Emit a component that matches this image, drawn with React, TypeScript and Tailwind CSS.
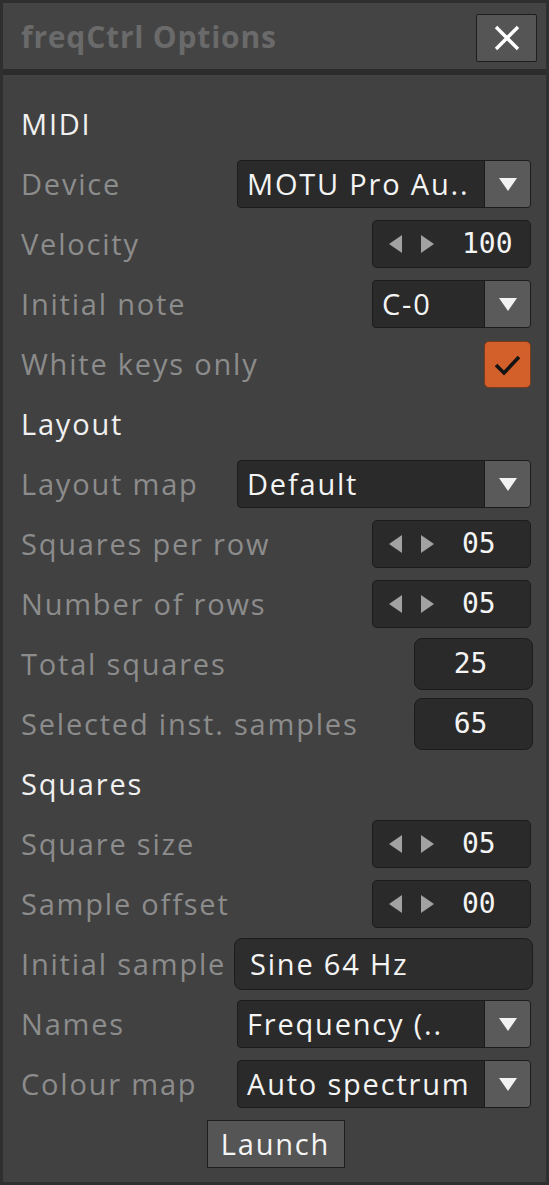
import React from 'react';

const sans = "font-['Open_Sans','Noto_Sans',sans-serif] tracking-[1.8px]";
const mono = "font-['DejaVu_Sans_Mono',monospace]";

const Row = ({ children }: { children: React.ReactNode }) => (
    <div className="h-[60px] flex items-center justify-between">{children}</div>
);

const Section = ({ title }: { title: string }) => (
    <Row>
        <span className={`${sans} text-[29px] text-[#f0f0f0]`}>{title}</span>
    </Row>
);

const Label = ({ text }: { text: string }) => (
    <span className={`${sans} text-[29px] text-[#8c8c8c] whitespace-nowrap`}>{text}</span>
);

const Caret = () => (
    <svg width="18" height="13" viewBox="0 0 18 13">
        <path d="M0 0 H18 L9 13 Z" fill="#f2f2f2" />
    </svg>
);

const Dropdown = ({ value, wide }: { value: string; wide?: boolean }) => (
    <div className={`${wide ? 'w-[294px]' : 'w-[159px]'} h-[48px] flex rounded-[4px] border border-[#1c1c1c] bg-[#2a2a2a] overflow-hidden`}>
        <div className={`${sans} flex-1 flex items-center pl-[9px] text-[29px] text-[#f4f4f4] whitespace-nowrap overflow-hidden`}>
            {value}
        </div>
        <div className="w-[46px] flex items-center justify-center bg-[#5a5a5a] border-l border-[#1c1c1c]">
            <Caret />
        </div>
    </div>
);

const Spinner = ({ value }: { value: string }) => (
    <div className="w-[159px] h-[48px] flex items-center rounded-[5px] border border-[#1c1c1c] bg-[#2a2a2a] pl-[16px]">
        <svg width="46" height="18" viewBox="0 0 46 18">
            <path d="M13 0 V18 L0 9 Z" fill="#a2a2a2" />
            <path d="M32 0 V18 L45 9 Z" fill="#a2a2a2" />
        </svg>
        <span className={`${mono} ml-[27px] text-[28px] text-[#f4f4f4]`}>{value}</span>
    </div>
);

const ValueBox = ({ value }: { value: string }) => (
    <div className={`${mono} w-[119px] h-[52px] mr-[-2px] flex items-center justify-center rounded-[8px] border border-[#1c1c1c] bg-[#2a2a2a] text-[28px] text-[#f4f4f4] pr-[6px]`}>
        {value}
    </div>
);

const TextInput = ({ value }: { value: string }) => (
    <div className={`${sans} w-[299px] h-[52px] mr-[-2px] flex items-center rounded-[8px] border border-[#1c1c1c] bg-[#2d2d2d] pl-[15px] text-[29px] text-[#f4f4f4]`}>
        {value}
    </div>
);

const Checkbox = () => (
    <div className="w-[47px] h-[47px] flex items-center justify-center rounded-[5px] border border-[#7a3a1c] bg-[#d35f2b]">
        <svg width="28" height="24" viewBox="0 0 28 24" className="mt-[2px]">
            <path d="M2 12 L10 20 L25 4" fill="none" stroke="#141414" strokeWidth="3.6" />
        </svg>
    </div>
);

export default function App() {
    return (
        <div className="w-[549px] h-[1185px] bg-[#2f2f2f] p-[3px]">
            <div className="h-full flex flex-col bg-[#414141]">
                {/* Title bar */}
                <div className="h-[66px] flex items-center justify-between pl-[18px] pr-[9px] bg-[#444444]">
                    <span className="font-['Open_Sans','Noto_Sans',sans-serif] font-bold tracking-[0.8px] text-[30px] text-[#6a6a6a]">freqCtrl Options</span>
                    <button className="w-[61px] h-[48px] flex items-center justify-center bg-[#555555] border border-[#1e1e1e] rounded-[2px] mt-[3px]">
                        <svg width="26" height="26" viewBox="0 0 26 26">
                            <path d="M2 2 L24 24 M24 2 L2 24" stroke="#fff" strokeWidth="3.4" />
                        </svg>
                    </button>
                </div>
                <div className="h-[6px] bg-[#2c2c2c]" />

                {/* Content */}
                <div className="flex-1 pt-[19px] pl-[18px] pr-[15px]">
                    <Section title="MIDI" />
                    <Row><Label text="Device" /><Dropdown value="MOTU Pro Au.." wide /></Row>
                    <Row><Label text="Velocity" /><Spinner value="100" /></Row>
                    <Row><Label text="Initial note" /><Dropdown value="C-0" /></Row>
                    <Row><Label text="White keys only" /><Checkbox /></Row>

                    <Section title="Layout" />
                    <Row><Label text="Layout map" /><Dropdown value="Default" wide /></Row>
                    <Row><Label text="Squares per row" /><Spinner value="05" /></Row>
                    <Row><Label text="Number of rows" /><Spinner value="05" /></Row>
                    <Row><Label text="Total squares" /><ValueBox value="25" /></Row>
                    <Row><Label text="Selected inst. samples" /><ValueBox value="65" /></Row>

                    <Section title="Squares" />
                    <Row><Label text="Square size" /><Spinner value="05" /></Row>
                    <Row><Label text="Sample offset" /><Spinner value="00" /></Row>
                    <Row><Label text="Initial sample" /><TextInput value="Sine 64 Hz" /></Row>
                    <Row><Label text="Names" /><Dropdown value="Frequency (.." wide /></Row>
                    <Row><Label text="Colour map" /><Dropdown value="Auto spectrum" wide /></Row>

                    <div className="h-[60px] flex items-center justify-center pr-[1px]">
                        <button className={`${sans} w-[138px] h-[48px] bg-[#555555] border border-[#1e1e1e] text-[29px] text-[#f4f4f4]`}>
                            Launch
                        </button>
                    </div>
                </div>
            </div>
        </div>
    );
}
